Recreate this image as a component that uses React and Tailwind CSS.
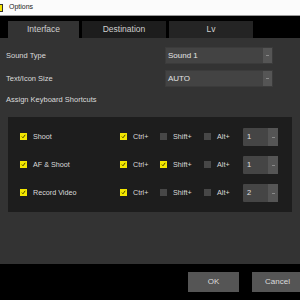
import React from "react";

const rows = [
  { name: "Shoot", ctrl: true, shift: false, alt: false, key: "1" },
  { name: "AF & Shoot", ctrl: true, shift: true, alt: false, key: "1" },
  { name: "Record Video", ctrl: true, shift: false, alt: false, key: "2" },
];

function Box({ on }) {
  return on ? (
    <span className="w-[7px] h-[7px] bg-[#f2e600] flex items-center justify-center shrink-0">
      <svg width="5" height="5" viewBox="0 0 5 5">
        <path d="M0.8 2.6 L2 3.8 L4.2 0.8" fill="none" stroke="#3a3500" strokeWidth="0.9" />
      </svg>
    </span>
  ) : (
    <span className="w-[7px] h-[7px] bg-[#474747] shrink-0" />
  );
}

function Arrow() {
  return <span className="w-[3px] h-px bg-[#8a8a8a]" />;
}

export default function App() {
  return (
    <div
      className="w-[300px] h-[300px] bg-black flex flex-col overflow-hidden text-[#dadada]"
      style={{ fontFamily: "'Liberation Sans', Arial, sans-serif" }}
    >
      {/* Title bar */}
      <div className="h-[16px] bg-[#fbfbfb] flex items-center border-b border-[#9a9a9a] shrink-0">
        <span className="w-[7px] h-[8px] -ml-[4px] bg-[#f4e000] border border-[#333]" />
        <span className="ml-[6px] text-[7px] text-[#222]">Options</span>
      </div>

      {/* Tabs */}
      <div className="h-[22px] flex items-end pl-[8px] gap-[3px] shrink-0">
        <div className="w-[71px] h-[17px] bg-[#333333] flex items-center justify-center text-[8.5px] text-[#cfcfcf]">
          Interface
        </div>
        <div className="w-[84px] h-[17px] bg-[#1d1d1d] flex items-center justify-center text-[8.5px] text-[#cfcfcf]">
          Destination
        </div>
        <div className="w-[84px] h-[17px] bg-[#242424] flex items-center justify-center text-[8.5px] text-[#cfcfcf]">
          Lv
        </div>
      </div>

      {/* Content */}
      <div className="h-[226px] bg-[#333333] px-[6px] pt-[9px] shrink-0">
        <div className="flex items-center h-[17px]">
          <span className="w-[159px] text-[7.5px]">Sound Type</span>
          <div className="w-[108px] h-[17px] bg-[#434343] flex items-stretch border border-[#3b3b3b]">
            <span className="flex-1 flex items-center pl-[2px] text-[8px] text-[#e4e4e4]">Sound 1</span>
            <span className="w-[9px] bg-[#555555] flex items-center justify-center"><Arrow /></span>
          </div>
        </div>
        <div className="flex items-center h-[17px] mt-[6px]">
          <span className="w-[159px] text-[7.5px]">Text/Icon Size</span>
          <div className="w-[108px] h-[17px] bg-[#434343] flex items-stretch border border-[#3b3b3b]">
            <span className="flex-1 flex items-center pl-[2px] text-[8px] text-[#e4e4e4]">AUTO</span>
            <span className="w-[9px] bg-[#555555] flex items-center justify-center"><Arrow /></span>
          </div>
        </div>
        <div className="mt-[6px] h-[13px] flex items-center text-[7.5px]">Assign Keyboard Shortcuts</div>

        {/* Shortcut panel */}
        <div className="mt-[11px] ml-[2px] w-[284px] h-[95px] bg-[#1d1d1d] pl-[12px] pt-[11px] flex flex-col gap-[10px]">
          {rows.map((r) => (
            <div key={r.name} className="grid grid-cols-[100px_40px_44px_39px_35px] items-center h-[18px] text-[7.2px]">
              <div className="flex items-center gap-[6px]">
                <Box on />
                <span>{r.name}</span>
              </div>
              <div className="flex items-center gap-[6px]">
                <Box on={r.ctrl} />
                <span>Ctrl+</span>
              </div>
              <div className="flex items-center gap-[6px]">
                <Box on={r.shift} />
                <span>Shift+</span>
              </div>
              <div className="flex items-center gap-[6px]">
                <Box on={r.alt} />
                <span>Alt+</span>
              </div>
              <div className="h-[18px] bg-[#454545] flex items-stretch rounded-[1px]">
                <span className="flex-1 flex items-center pl-[4px] text-[7.5px] text-[#e0e0e0]">{r.key}</span>
                <span className="w-[10px] bg-[#555555] flex items-center justify-center"><Arrow /></span>
              </div>
            </div>
          ))}
        </div>
      </div>

      {/* Footer */}
      <div className="flex-1 flex items-start pt-[8px] pl-[188px] gap-[13px]">
        <button className="w-[51px] h-[20px] bg-[#555555] text-[8px] text-[#dcdcdc] shrink-0">OK</button>
        <button className="w-[51px] h-[20px] bg-[#555555] text-[8px] text-[#dcdcdc] shrink-0">Cancel</button>
      </div>
    </div>
  );
}
